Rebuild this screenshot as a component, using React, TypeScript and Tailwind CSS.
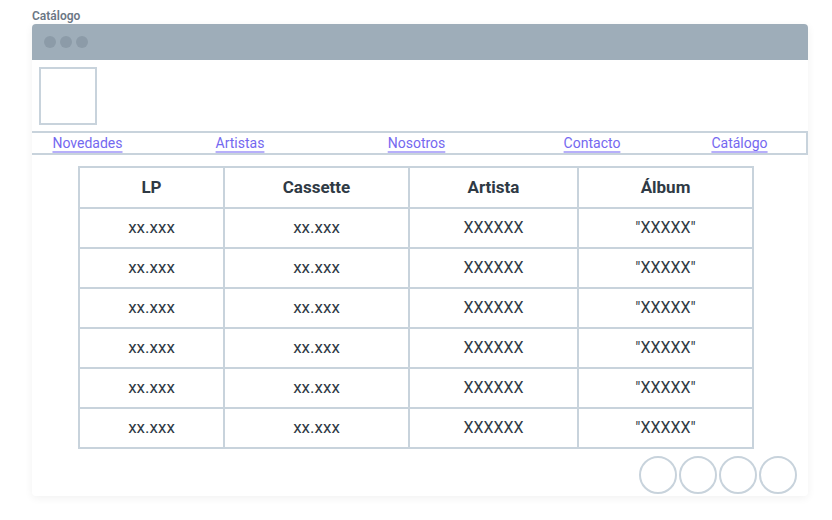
import React from "react";

const links = [
  { label: "Novedades", w: "w-[111px]" },
  { label: "Artistas", w: "w-[194px]" },
  { label: "Nosotros", w: "w-[159px]" },
  { label: "Contacto", w: "w-[192px]" },
  { label: "Catálogo", w: "w-[103px]" },
];

const rows = Array.from({ length: 6 });

export default function App() {
  return (
    <div className="w-[832px] h-[520px] bg-white font-['Roboto',sans-serif] relative">
      <div className="pt-[8px] pl-[32px] text-[12px] leading-[16px] font-semibold text-[#6b7785]">Catálogo</div>
      <div className="ml-[32px] w-[776px] h-[472px] bg-white rounded-[4px] shadow-[0_2px_8px_rgba(0,0,0,0.06)] flex flex-col">
        <div className="h-[36px] bg-[#9eadb9] rounded-t-[4px] flex items-center gap-[4px] pl-[12px]">
          <div className="w-[12px] h-[12px] rounded-full bg-[#8c9ba8]" />
          <div className="w-[12px] h-[12px] rounded-full bg-[#8c9ba8]" />
          <div className="w-[12px] h-[12px] rounded-full bg-[#8c9ba8]" />
        </div>
        <div className="pt-[7px] pl-[7px]">
          <div className="w-[58px] h-[58px] border-2 border-[#c8d3dc]" />
        </div>
        <nav className="mt-[6px] h-[24px] border-t-2 border-b-2 border-r-2 border-[#c8d3dc] flex items-center">
          {links.map((l) => (
            <div key={l.label} className={`${l.w} text-center`}>
              <span className="text-[14px] leading-[18px] text-[#7468f0] underline decoration-[#b7affa] decoration-2 underline-offset-[3px]">
                {l.label}
              </span>
            </div>
          ))}
        </nav>
        <div className="pl-[46px] pt-[11px]">
          <table className="table-fixed border-collapse border-2 border-[#c8d3dc] w-[674px] text-[#2f3a45]">
            <colgroup>
              <col className="w-[145px]" />
              <col className="w-[185px]" />
              <col className="w-[169px]" />
              <col className="w-[175px]" />
            </colgroup>
            <thead>
              <tr className="h-[41px]">
                {["LP", "Cassette", "Artista", "Álbum"].map((h) => (
                  <th key={h} className="border-2 border-[#c8d3dc] text-[17px] font-bold text-center p-0">
                    {h}
                  </th>
                ))}
              </tr>
            </thead>
            <tbody>
              {rows.map((_, i) => (
                <tr key={i} className="h-[40px]">
                  <td className="border-2 border-[#c8d3dc] text-[17px] text-center p-0">xx.xxx</td>
                  <td className="border-2 border-[#c8d3dc] text-[17px] text-center p-0">xx.xxx</td>
                  <td className="border-2 border-[#c8d3dc] text-[16px] text-center p-0">XXXXXX</td>
                  <td className="border-2 border-[#c8d3dc] text-[16px] text-center p-0">"XXXXX"</td>
                </tr>
              ))}
            </tbody>
          </table>
        </div>
        <div className="flex justify-end gap-[2px] pr-[11px] pt-[7px]">
          {[0, 1, 2, 3].map((i) => (
            <div key={i} className="w-[38px] h-[38px] rounded-full border-2 border-[#c8d3dc]" />
          ))}
        </div>
      </div>
    </div>
  );
}
